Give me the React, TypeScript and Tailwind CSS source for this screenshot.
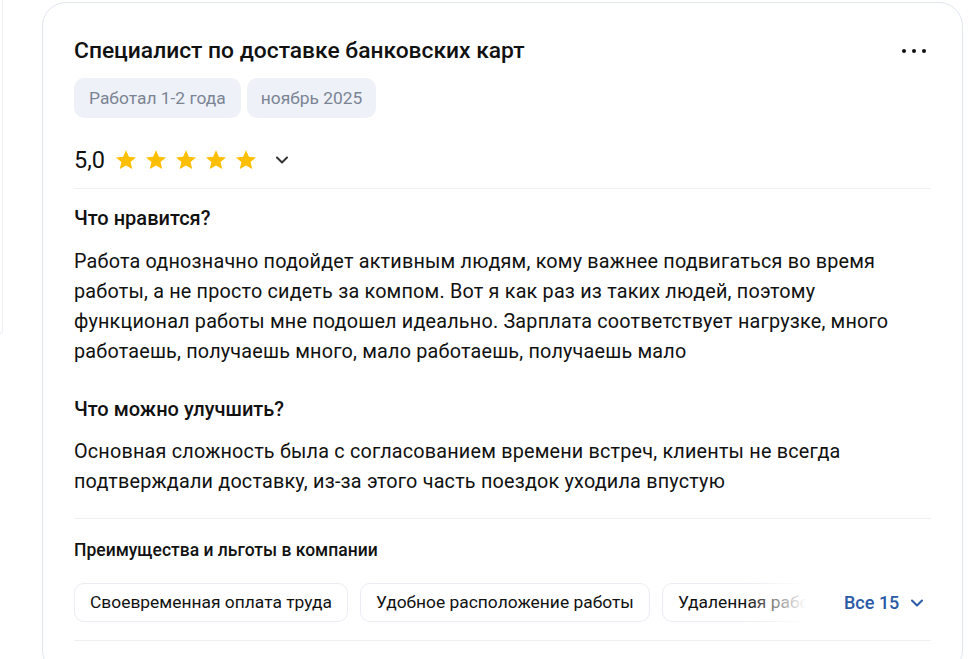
import React from 'react';

const Star = () => (
  <svg viewBox="0 0 24 24" className="w-[24px] h-[24px]" fill="#fdbf00">
    <path d="M12 2.2l2.9 6.6 7.1.6-5.4 4.7 1.6 7-6.2-3.7-6.2 3.7 1.6-7L2 9.4l7.1-.6z" />
  </svg>
);

const Chevron = ({ className }: { className: string }) => (
  <svg viewBox="0 0 24 24" className={className} fill="none" stroke="currentColor" strokeWidth={2.4} strokeLinecap="round" strokeLinejoin="round">
    <path d="M6 9l6 6 6-6" />
  </svg>
);

const perks = ['Своевременная оплата труда', 'Удобное расположение работы', 'Удаленная работа'];

export default function App() {
  return (
    <div className="flex bg-white min-h-[659px] overflow-hidden font-['Roboto',sans-serif] text-[#111]">
      <div className="w-[3px] h-[334px] shrink-0 border-r border-b border-[#eceff4] rounded-br-[6px]" />
      <div className="ml-[39px] mt-[2px] w-[921px] shrink-0 border border-[#e1e6ef] rounded-[24px] px-[31px] pt-[33px] pb-8">
        <div className="flex items-start justify-between">
          <h2 className="text-[22.8px] leading-[30px] font-medium">Специалист по доставке банковских карт</h2>
          <div className="flex gap-[6px] mt-[13px] mr-[5px]">
            <span className="w-[4px] h-[4px] rounded-full bg-[#111]" />
            <span className="w-[4px] h-[4px] rounded-full bg-[#111]" />
            <span className="w-[4px] h-[4px] rounded-full bg-[#111]" />
          </div>
        </div>
        <div className="flex gap-[6px] mt-[12px]">
          <span className="h-[40px] flex items-center px-[15px] rounded-[10px] bg-[#eef1f7] text-[#7b8494] text-[17.4px]">Работал 1-2 года</span>
          <span className="h-[40px] flex items-center px-[14px] rounded-[10px] bg-[#eef1f7] text-[#7b8494] text-[17.4px]">ноябрь 2025</span>
        </div>
        <div className="flex items-center mt-[28px] h-[28px]">
          <span className="text-[23.5px] leading-[28px] mr-[9px]">5,0</span>
          <div className="flex gap-[6px]">
            <Star />
            <Star />
            <Star />
            <Star />
            <Star />
          </div>
          <Chevron className="w-[20px] h-[20px] text-[#333] ml-[14px]" />
        </div>
        <div className="h-px bg-[#eef0f4] mt-[14px]" />
        <h3 className="text-[20px] leading-[26px] font-medium mt-[16px]">Что нравится?</h3>
        <p className="text-[19.8px] leading-[30px] tracking-[0.2px] mt-[16px] max-w-[830px]">
          Работа однозначно подойдет активным людям, кому важнее подвигаться во время работы, а не просто сидеть за компом. Вот я как раз из таких людей, поэтому функционал работы мне подошел идеально. Зарплата соответствует нагрузке, много работаешь, получаешь много, мало работаешь, получаешь мало
        </p>
        <h3 className="text-[20px] leading-[26px] font-medium mt-[29px]">Что можно улучшить?</h3>
        <p className="text-[19.8px] leading-[30px] tracking-[0.2px] mt-[15px] max-w-[830px]">
          Основная сложность была с согласованием времени встреч, клиенты не всегда подтверждали доставку, из-за этого часть поездок уходила впустую
        </p>
        <div className="h-px bg-[#eef0f4] mt-[21px]" />
        <h4 className="text-[17.5px] leading-[24px] font-medium mt-[19px]">Преимущества и льготы в компании</h4>
        <div className="flex items-center mt-[21px]">
          <div className="relative w-[732px] overflow-hidden">
            <div className="flex gap-[12px]">
              {perks.map((p) => (
                <span key={p} className="shrink-0 h-[39px] flex items-center px-[15px] rounded-[10px] border border-[#e9ecf2] text-[17.4px] whitespace-nowrap">
                  {p}
                </span>
              ))}
            </div>
            <div className="absolute right-0 top-0 h-full w-[60px] bg-gradient-to-r from-white/0 to-white" />
          </div>
          <button className="flex items-center ml-[38px] text-[#2b5aa6] text-[18px] font-medium">
            Все 15
            <Chevron className="w-[20px] h-[20px] ml-[8px]" />
          </button>
        </div>
        <div className="h-px bg-[#eef0f4] mt-[18px]" />
      </div>
    </div>
  );
}
